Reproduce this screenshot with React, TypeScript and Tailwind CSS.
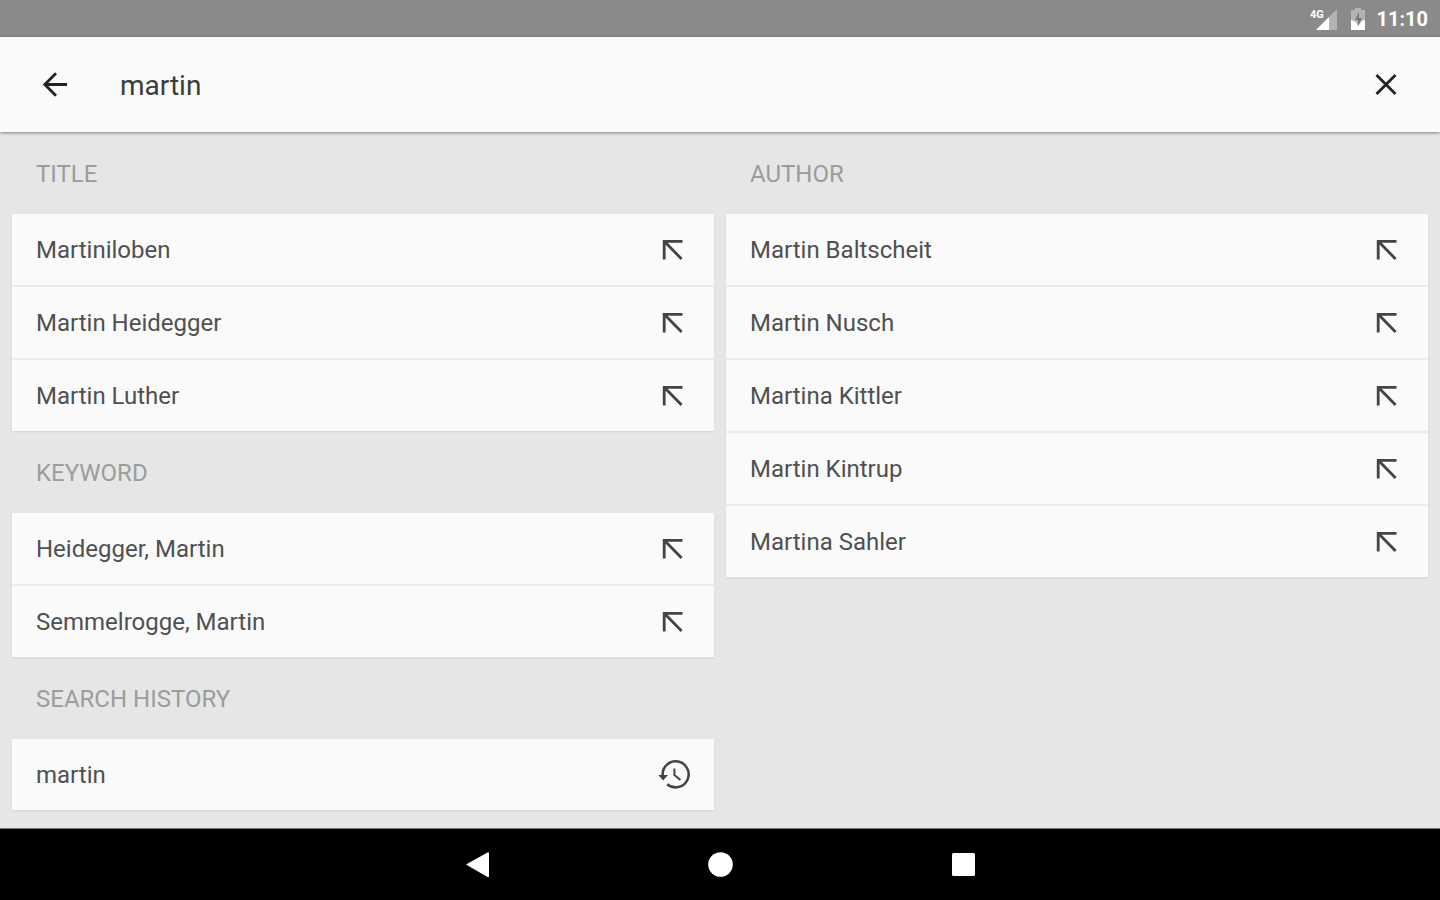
import { useState } from "react";

type Suggestion = { label: string; recent?: boolean };
type Group = { heading: string; items: Suggestion[] };

const leftGroups: Group[] = [
  {
    heading: "TITLE",
    items: [{ label: "Martiniloben" }, { label: "Martin Heidegger" }, { label: "Martin Luther" }],
  },
  {
    heading: "KEYWORD",
    items: [{ label: "Heidegger, Martin" }, { label: "Semmelrogge, Martin" }],
  },
  { heading: "SEARCH HISTORY", items: [{ label: "martin", recent: true }] },
];

const rightGroups: Group[] = [
  {
    heading: "AUTHOR",
    items: [
      { label: "Martin Baltscheit" },
      { label: "Martin Nusch" },
      { label: "Martina Kittler" },
      { label: "Martin Kintrup" },
      { label: "Martina Sahler" },
    ],
  },
];

function InsertIcon() {
  return (
    <svg className="size-9 shrink-0" viewBox="0 0 36 36" fill="none" stroke="#444" strokeWidth="2.8" aria-hidden="true">
      <path d="M7.2 27.5V9.4H25.5M8 10L24.6 27" />
    </svg>
  );
}

function HistoryIcon() {
  return (
    <svg className="size-9 shrink-0" viewBox="0 0 36 36" fill="none" stroke="#444" strokeWidth="2.6" aria-hidden="true">
      <path d="M5.7 18.3A13 13 0 1 1 10.2 27.2" />
      <path d="M1.3 18H11L6.1 23.4Z" fill="#444" stroke="none" />
      <path d="M17.4 11.5V18L23.4 23" strokeWidth="2" />
    </svg>
  );
}

function StatusBar() {
  return (
    <div className="flex h-[37px] items-center justify-end bg-[#8a8a8a] pr-3 text-white">
      <svg className="mr-3 h-6 w-7" viewBox="0 0 28 24" aria-label="4G signal">
        <path d="M27 2V23H6Z" fill="#fff" opacity="0.35" />
        <path d="M19 10V23H6Z" fill="#fff" />
        <text x="0" y="11" fill="#fff" fontSize="11" fontWeight="700" fontFamily="Roboto, sans-serif">
          4G
        </text>
      </svg>
      <svg className="mr-2.5 h-6 w-4" viewBox="0 0 16 24" aria-label="Battery charging">
        <path d="M5 1h6v2h4v20H1V3h4Z" fill="#fff" opacity="0.35" />
        <path d="M1 13l5 2 2 4 4-5 3-1v10H1Z" fill="#fff" />
        <path d="M9 5L5 13h3v6l4-8H9Z" fill="#777" />
      </svg>
      <span className="text-xl font-bold">11:10</span>
    </div>
  );
}

function SuggestionGroup({ group, onPick }: { group: Group; onPick: (value: string) => void }) {
  return (
    <section>
      <h2 className="flex h-[82px] items-center px-6 pt-0.5 text-2xl text-[#9c9c9c]">{group.heading}</h2>
      <ul className="divide-y-2 divide-[#ebebeb] bg-[#fafafa] shadow-[0_1px_2px_rgba(0,0,0,0.08)]">
        {group.items.map((item) => (
          <li key={item.label}>
            <button
              type="button"
              onClick={() => onPick(item.label)}
              className="flex h-[71px] w-full items-center justify-between pr-[21px] pl-6 text-left text-2xl text-[#505050]"
            >
              <span>{item.label}</span>
              {item.recent ? <HistoryIcon /> : <InsertIcon />}
            </button>
          </li>
        ))}
      </ul>
    </section>
  );
}

export default function App() {
  const [query, setQuery] = useState("martin");

  return (
    <div className="flex min-h-screen flex-col bg-[#e6e6e6] font-[Roboto,sans-serif]">
      <StatusBar />

      <header className="z-10 flex h-[95px] items-center bg-[#fafafa] px-9 shadow-[0_1px_3px_rgba(0,0,0,0.45)]">
        <button type="button" aria-label="Back">
          <svg className="size-9" viewBox="0 0 36 36" fill="none" stroke="#222" strokeWidth="2.8" aria-hidden="true">
            <path d="M31 17.5H9M20 6.3L8.8 17.5L20 28.7" />
          </svg>
        </button>
        <input
          type="text"
          aria-label="Search"
          value={query}
          onChange={(e) => setQuery(e.target.value)}
          className="ml-12 min-w-0 flex-1 bg-transparent pt-0.5 text-[28px] text-[#3c3c3c] outline-none"
        />
        <button type="button" aria-label="Clear search" onClick={() => setQuery("")}>
          <svg className="size-9" viewBox="0 0 36 36" fill="none" stroke="#222" strokeWidth="2.8" aria-hidden="true">
            <path d="M8.5 8L27.5 27M27.5 8L8.5 27" />
          </svg>
        </button>
      </header>

      <main className="grid flex-1 grid-cols-2 items-start gap-3 px-3 pb-4">
        <div>
          {leftGroups.map((group) => (
            <SuggestionGroup key={group.heading} group={group} onPick={setQuery} />
          ))}
        </div>
        <div>
          {rightGroups.map((group) => (
            <SuggestionGroup key={group.heading} group={group} onPick={setQuery} />
          ))}
        </div>
      </main>

      <nav className="flex h-[72px] items-center justify-center border-t border-[#777] bg-black">
        <button type="button" aria-label="Back" className="flex w-[243px] justify-center">
          <svg className="size-7" viewBox="0 0 28 28" aria-hidden="true">
            <path d="M3 13.5L24.5 1.5H26V26H24.5Z" fill="#fff" />
          </svg>
        </button>
        <button type="button" aria-label="Home" className="flex w-[243px] justify-center">
          <svg className="size-7" viewBox="0 0 28 28" aria-hidden="true">
            <circle cx="14.5" cy="13.5" r="12.3" fill="#fff" />
          </svg>
        </button>
        <button type="button" aria-label="Recent apps" className="flex w-[243px] justify-center">
          <svg className="size-7" viewBox="0 0 28 28" aria-hidden="true">
            <rect x="3" y="2" width="23" height="23" rx="1.5" fill="#fff" />
          </svg>
        </button>
      </nav>
    </div>
  );
}
